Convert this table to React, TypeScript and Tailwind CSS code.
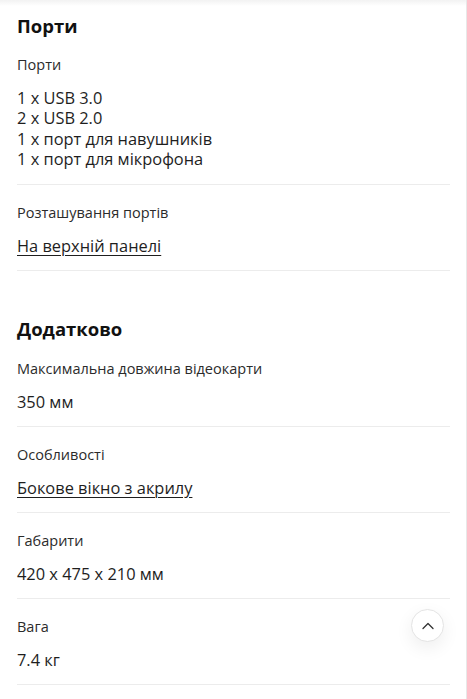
import React from 'react';

interface Spec {
  label: string;
  values: string[];
  link?: boolean;
}

const ports: Spec[] = [
  { label: 'Порти', values: ['1 x USB 3.0', '2 x USB 2.0', '1 x порт для навушників', '1 x порт для мікрофона'] },
  { label: 'Розташування портів', values: ['На верхній панелі'], link: true },
];

const extra: Spec[] = [
  { label: 'Максимальна довжина відеокарти', values: ['350 мм'] },
  { label: 'Особливості', values: ['Бокове вікно з акрилу'], link: true },
  { label: 'Габарити', values: ['420 x 475 x 210 мм'] },
  { label: 'Вага', values: ['7.4 кг'] },
];

const SpecRow: React.FC<{ spec: Spec }> = ({ spec }) => {
  const multi = spec.values.length > 1;
  return (
    <div className={multi ? 'border-b border-[#ececec] pt-[18px] pb-[14px]' : 'border-b border-[#ececec] pt-[18px] pb-[12px]'}>
      <div className="text-[14.5px] leading-[20px] text-[#2b2b2b]">{spec.label}</div>
      {multi ? (
        <div className="mt-[13px] text-[16.4px] leading-[20.4px] text-[#1e1e1e] whitespace-pre-line">
          {spec.values.join('\n')}
        </div>
      ) : (
        <div className="mt-[11px] text-[16.4px] leading-[24px] text-[#1e1e1e]">
          {spec.link ? <span className="underline underline-offset-[3px] decoration-1">{spec.values[0]}</span> : spec.values[0]}
        </div>
      )}
    </div>
  );
};

const App: React.FC = () => {
  return (
    <div className="relative min-h-[699px] bg-white font-['Open_Sans',sans-serif] overflow-hidden">
      <div className="absolute inset-x-0 top-0 h-[6px] bg-gradient-to-b from-[#f2f2f2] to-white" />
      <div className="absolute right-0 top-0 bottom-0 w-px bg-[#e8e8e8]" />
      <div className="relative pl-[17px] pr-[17px]">
        <h2 className="pt-[13px] text-[18.5px] leading-[26px] font-bold text-[#111]">Порти</h2>
        <div className="-mt-[2px]">
          {ports.map(s => <SpecRow key={s.label} spec={s} />)}
        </div>
        <h2 className="pt-[45px] text-[18.5px] leading-[26px] font-bold text-[#111]">Додатково</h2>
        <div className="-mt-[1px]">
          {extra.map(s => <SpecRow key={s.label} spec={s} />)}
        </div>
      </div>
      <button className="absolute left-[411px] top-[609px] w-[33px] h-[33px] rounded-full bg-white border border-[#e4e4e4] shadow-[0_6px_18px_rgba(0,0,0,0.07)] flex items-center justify-center">
        <svg width="12" height="8" viewBox="0 0 12 8" fill="none">
          <path d="M1 6.5L6 1.5L11 6.5" stroke="#333" strokeWidth="1.3" strokeLinecap="round" strokeLinejoin="round" />
        </svg>
      </button>
    </div>
  );
};

export default App;
